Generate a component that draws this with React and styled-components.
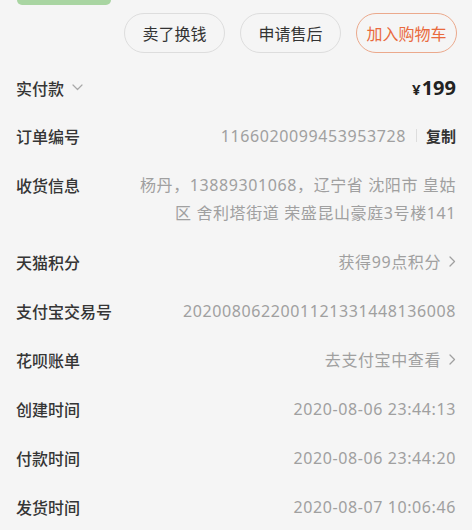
import React from "react"
import styled, { createGlobalStyle } from "styled-components"

const GlobalStyle = createGlobalStyle`
  html, body {
    margin: 0;
    padding: 0;
    background: #f5f5f5;
  }
  body {
    font-family: "Noto Sans CJK SC", "Noto Sans", sans-serif;
    -webkit-font-smoothing: antialiased;
  }
`

const Page = styled.div`
  width: 472px;
  min-height: 530px;
  background: #f5f5f5;
  overflow: hidden;
`

const StatusStub = styled.div`
  width: 94px;
  height: 5px;
  margin-left: 17px;
  background: #a9d5a2;
  border-radius: 0 0 10px 10px;
`

const ActionBar = styled.div`
  display: flex;
  justify-content: flex-end;
  gap: 15px;
  padding: 8px 15px 0 0;
`

const ActionButton = styled.button`
  width: 101px;
  height: 40px;
  border-radius: 20px;
  border: 1px solid ${props => (props.primary ? "#eba98c" : "#dddddd")};
  background: transparent;
  color: ${props => (props.primary ? "#e96a3d" : "#333333")};
  font-family: inherit;
  font-size: 16px;
  padding: 0;
  cursor: pointer;
`

const List = styled.div`
  padding: 0 16px;
`

const SummaryRow = styled.div`
  display: flex;
  align-items: center;
  justify-content: space-between;
  height: 47px;
  margin-top: 11px;
`

const Row = styled.div`
  display: flex;
  align-items: flex-start;
  justify-content: space-between;
  padding: 10.5px 0;
  line-height: 28px;
`

const Label = styled.div`
  flex-shrink: 0;
  display: flex;
  align-items: center;
  gap: 8px;
  font-size: 16px;
  font-weight: 500;
  color: #353535;
  line-height: 28px;
`

const Value = styled.div`
  flex: 1;
  display: flex;
  justify-content: flex-end;
  align-items: center;
  font-family: "Noto Sans", "Noto Sans CJK SC", sans-serif;
  font-size: 16px;
  letter-spacing: 0.6px;
  color: #a0a0a0;
  text-align: right;
  line-height: 28px;
  margin-left: 24px;
`

const Address = styled(Value)`
  display: block;
`

const Price = styled.div`
  font-family: "Noto Sans", sans-serif;
  font-size: 20px;
  font-weight: 700;
  color: #222222;
  display: flex;
  align-items: baseline;
`

const Yen = styled.span`
  font-size: 15px;
  margin-right: 1px;
`

const Divider = styled.span`
  width: 1px;
  height: 13px;
  background: #dddddd;
  margin: 0 9px 0 10px;
`

const CopyLink = styled.span`
  font-family: "Noto Sans CJK SC", sans-serif;
  font-size: 15px;
  font-weight: 700;
  letter-spacing: 0;
  color: #333333;
`

const Chevron = ({ dir = "right" }) =>
  dir === "down" ? (
    <svg width="11" height="7" viewBox="0 0 11 7" fill="none">
      <path d="M1 1l4.5 4.5L10 1" stroke="#a8a8a8" strokeWidth="1.2" strokeLinecap="round" strokeLinejoin="round" />
    </svg>
  ) : (
    <svg width="7" height="11" viewBox="0 0 7 11" fill="none" style={{ marginLeft: 8 }}>
      <path d="M1 1l4.5 4.5L1 10" stroke="#a0a0a0" strokeWidth="1.3" strokeLinecap="round" strokeLinejoin="round" />
    </svg>
  )

const rows = [
  { label: "天猫积分", value: "获得99点积分", arrow: true },
  { label: "支付宝交易号", value: "2020080622001121331448136008" },
  { label: "花呗账单", value: "去支付宝中查看", arrow: true },
  { label: "创建时间", value: "2020-08-06 23:44:13" },
  { label: "付款时间", value: "2020-08-06 23:44:20" },
  { label: "发货时间", value: "2020-08-07 10:06:46" },
]

const App = () => (
  <Page>
    <GlobalStyle />
    <StatusStub />
    <ActionBar>
      <ActionButton>卖了换钱</ActionButton>
      <ActionButton>申请售后</ActionButton>
      <ActionButton primary>加入购物车</ActionButton>
    </ActionBar>
    <List>
      <SummaryRow>
        <Label>
          实付款
          <Chevron dir="down" />
        </Label>
        <Price>
          <Yen>¥</Yen>199
        </Price>
      </SummaryRow>
      <Row>
        <Label>订单编号</Label>
        <Value>
          1166020099453953728
          <Divider />
          <CopyLink>复制</CopyLink>
        </Value>
      </Row>
      <Row>
        <Label>收货信息</Label>
        <Address>
          杨丹，13889301068，辽宁省 沈阳市 皇姑
          <br />
          区 舍利塔街道 荣盛昆山豪庭3号楼141
        </Address>
      </Row>
      {rows.map(r => (
        <Row key={r.label}>
          <Label>{r.label}</Label>
          <Value>
            {r.value}
            {r.arrow && <Chevron />}
          </Value>
        </Row>
      ))}
    </List>
  </Page>
)

export default App
